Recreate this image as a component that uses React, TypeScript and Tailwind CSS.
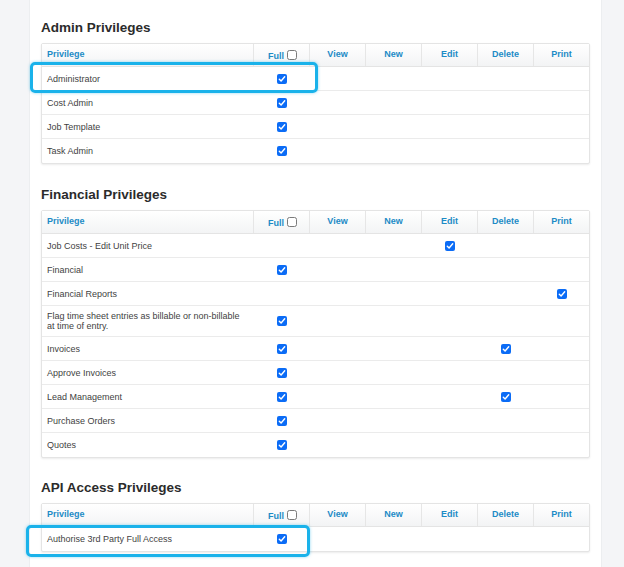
import React from "react";

type Row = { name: React.ReactNode; checks: string[]; tall?: boolean };

const cols = ["Full", "View", "New", "Edit", "Delete", "Print"];

function Checked() {
  return (
    <div className="w-[10px] h-[10px] rounded-[2px] bg-[#0b6cf6] flex items-center justify-center">
      <svg width="8" height="8" viewBox="0 0 8 8">
        <path d="M1.3 4.2 L3.1 6 L6.7 1.8" stroke="white" strokeWidth="1.4" fill="none" strokeLinecap="round" strokeLinejoin="round" />
      </svg>
    </div>
  );
}

function Unchecked() {
  return <div className="w-[10px] h-[10px] rounded-[2.5px] border border-[#7a7a7a] bg-white" />;
}

function Table({ rows }: { rows: Row[] }) {
  return (
    <div className="w-[549px] border border-[#e4e4e4] rounded-[2px] shadow-[0_1px_2px_rgba(0,0,0,0.08)] bg-white">
      <div className="grid grid-cols-[211px_56px_56px_56px_56px_56px_56px] h-[23px] border-b border-[#e4e4e4] bg-gradient-to-b from-[#ffffff] to-[#f3f4f5] text-[9px] font-bold text-[#1d8bc6]">
        <div className="flex items-center pl-[5px]">Privilege</div>
        {cols.map((c) => (
          <div key={c} className="flex items-center justify-center border-l border-[#e6e6e6]">
            {c === "Full" ? (
              <div className="flex items-center gap-[3px] translate-x-[1px]">
                <span className="translate-y-[2px]">Full</span>
                <Unchecked />
              </div>
            ) : (
              c
            )}
          </div>
        ))}
      </div>
      {rows.map((r, i) => (
        <div
          key={i}
          className={`grid grid-cols-[211px_56px_56px_56px_56px_56px_56px] ${r.tall ? "h-[31px]" : "h-[24px]"} ${i < rows.length - 1 ? "border-b border-[#ebebeb]" : ""} text-[9px] text-[#3f3f3f]`}
        >
          <div className="flex items-center pl-[5px] leading-[10px]">{r.name}</div>
          {cols.map((c) => (
            <div key={c} className="flex items-center justify-center">
              <div className="translate-x-[1px]">{r.checks.includes(c) ? <Checked /> : null}</div>
            </div>
          ))}
        </div>
      ))}
    </div>
  );
}

export default function App() {
  const admin: Row[] = [
    { name: "Administrator", checks: ["Full"] },
    { name: "Cost Admin", checks: ["Full"] },
    { name: "Job Template", checks: ["Full"] },
    { name: "Task Admin", checks: ["Full"] },
  ];
  const financial: Row[] = [
    { name: "Job Costs - Edit Unit Price", checks: ["Edit"] },
    { name: "Financial", checks: ["Full"] },
    { name: "Financial Reports", checks: ["Print"] },
    {
      name: (
        <span>
          Flag time sheet entries as billable or non-billable
          <br />
          at time of entry.
        </span>
      ),
      checks: ["Full"],
      tall: true,
    },
    { name: "Invoices", checks: ["Full", "Delete"] },
    { name: "Approve Invoices", checks: ["Full"] },
    { name: "Lead Management", checks: ["Full", "Delete"] },
    { name: "Purchase Orders", checks: ["Full"] },
    { name: "Quotes", checks: ["Full"] },
  ];
  const api: Row[] = [{ name: "Authorise 3rd Party Full Access", checks: ["Full"] }];

  return (
    <div className="w-[624px] h-[567px] overflow-hidden bg-[#f4f5f7] flex font-['Liberation_Sans',Arial,sans-serif]">
      <div className="w-[29px] shrink-0" />
      <div className="relative w-[573px] shrink-0 bg-white border-x border-[#eceef0] px-[11px] pt-[20px]">
        <h2 className="text-[13.5px] leading-[16px] font-bold text-[#2b2b2b] mb-[7px]">Admin Privileges</h2>
        <Table rows={admin} />
        <h2 className="text-[13.5px] leading-[16px] font-bold text-[#2b2b2b] mt-[23px] mb-[7px]">Financial Privileges</h2>
        <Table rows={financial} />
        <h2 className="text-[13.5px] leading-[16px] font-bold text-[#2b2b2b] mt-[22px] mb-[7px]">API Access Privileges</h2>
        <Table rows={api} />

        <div className="absolute left-[0px] top-[62px] w-[288px] h-[31px] rounded-[5px] border-[3px] border-[#1ab2ea] shadow-[0_0_3px_rgba(26,178,234,0.5)]" />
        <div className="absolute left-[-4px] top-[525px] w-[284px] h-[32px] rounded-[5px] border-[3px] border-[#1ab2ea] shadow-[0_0_3px_rgba(26,178,234,0.5)]" />
      </div>
    </div>
  );
}
